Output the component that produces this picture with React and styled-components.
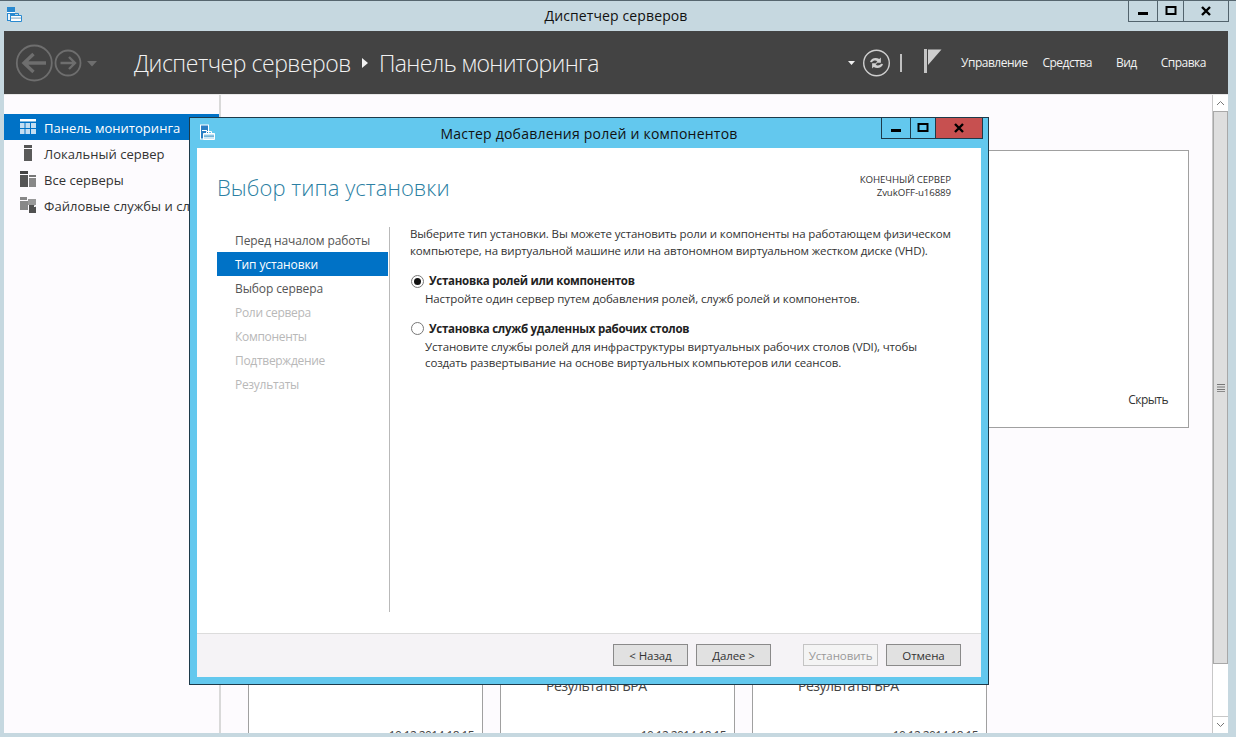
import React from "react";
import styled, { createGlobalStyle } from "styled-components";

const Global = createGlobalStyle`
  html, body { margin: 0; padding: 0; height: 100%; overflow: hidden; }
  body { font-family: "Open Sans", "Noto Sans", sans-serif; }
  #root { height: 100%; }
`;

const Window = styled.div`
  position: relative;
  width: 1236px;
  height: 737px;
  box-sizing: border-box;
  background: #c6d8e0;
  border-top: 1px solid #56666f;
  padding: 0 8px 4px 4px;
  display: flex;
  flex-direction: column;
  overflow: hidden;
`;
const TitleBar = styled.div`
  height: 30px;
  flex: none;
  display: flex;
  align-items: center;
  justify-content: center;
  font-size: 14px;
  color: #111;
  letter-spacing: 0.12px;
  padding-bottom: 1px;
  box-sizing: border-box;
`;
const AppIconSlot = styled.span`
  position: absolute;
  left: ${p => p.$left}px;
  top: ${p => p.$top}px;
  display: flex;
`;
const Controls = styled.div`
  position: absolute;
  right: ${p => p.$right}px;
  top: 0;
  display: flex;
  height: 21px;
  box-sizing: border-box;
  border: 1px solid ${p => p.$border};
  border-top: none;
`;
const Ctrl = styled.div`
  width: ${p => p.$w}px;
  display: flex;
  align-items: center;
  justify-content: center;
  box-sizing: border-box;
  background: ${p => p.$bg || "transparent"};
  border-left: ${p => (p.$first ? "none" : `1px solid ${p.$line}`)};
`;
const Toolbar = styled.div`
  height: 63px;
  flex: none;
  background: #434343;
  display: flex;
  align-items: center;
  color: #fff;
  padding: 0 22px 0 11px;
  box-sizing: border-box;
`;
const NavIcons = styled.span`
  display: flex;
  width: 119px;
  flex: none;
`;
const Crumb = styled.div`
  font-size: 23px;
  font-weight: 300;
  color: #f2f2f2;
  display: flex;
  align-items: center;
  gap: 10px;
  white-space: nowrap;
  letter-spacing: -0.46px;
`;
const CrumbTail = styled.span`
  letter-spacing: -0.62px;
`;
const Spacer = styled.div`
  flex: 1;
`;
const ToolIcons = styled.span`
  display: flex;
  margin-right: 14px;
`;
const Menu = styled.div`
  display: flex;
  font-size: 12px;
  color: #f2f2f2;
  letter-spacing: -0.5px;
`;
const MenuItem = styled.span`
  margin-left: ${p => p.$ml}px;
  white-space: nowrap;
`;
const Body = styled.div`
  flex: 1;
  min-height: 0;
  background: #fdfbfe;
  display: flex;
  border-top: 1px solid #e8e8e8;
  overflow: hidden;
`;
const Sidebar = styled.div`
  width: 215px;
  flex: none;
  border-right: 2px solid #d9d9d9;
  padding-top: 19px;
  overflow: hidden;
`;
const SideItem = styled.div`
  height: 26px;
  display: flex;
  align-items: center;
  gap: 8px;
  padding-left: 16px;
  font-size: 13px;
  white-space: nowrap;
  color: ${p => (p.$active ? "#fff" : "#333")};
  background: ${p => (p.$active ? "#0072c6" : "transparent")};
  letter-spacing: 0.03px;
  & > svg { flex: none; }
`;
const SideLabel = styled.span`
  padding-top: 2px;
`;
const Main = styled.div`
  flex: 1;
  min-width: 0;
  overflow: hidden;
  padding: 55px 0 0 27px;
  box-sizing: border-box;
  display: flex;
  flex-direction: column;
`;
const Panel = styled.div`
  width: 941px;
  height: 278px;
  flex: none;
  box-sizing: border-box;
  border: 1px solid #a0a0a0;
  background: #fff;
  display: flex;
  justify-content: flex-end;
  align-items: flex-end;
  padding: 0 20px 19px 0;
  font-size: 12px;
  color: #333;
  letter-spacing: -0.55px;
`;
const Cards = styled.div`
  display: flex;
  gap: 17px;
  margin-top: 222px;
  flex: none;
`;
const Card = styled.div`
  width: 235px;
  height: 110px;
  box-sizing: border-box;
  border: 1px solid #a0a0a0;
  background: #fff;
  padding: 27px 8px 0 45px;
  display: flex;
  flex-direction: column;
  color: #444;
`;
const CardTitle = styled.span`
  font-size: 14px;
  line-height: 16px;
  height: 16px;
  letter-spacing: -0.5px;
`;
const CardDate = styled.span`
  align-self: flex-end;
  white-space: nowrap;
  margin-top: 34px;
  font-size: 12px;
  line-height: 16px;
  letter-spacing: -0.6px;
`;
const Scrollbar = styled.div`
  width: 16px;
  flex: none;
  display: flex;
  flex-direction: column;
  background: #fff;
  border-left: 1px solid #c8c8c8;
  box-sizing: border-box;
`;
const ScrollBtn = styled.div`
  height: 16px;
  flex: none;
  display: flex;
  align-items: center;
  justify-content: center;
  ${p => (p.$down ? "border-top: 1px solid #c8c8c8;" : "")}
`;
const Thumb = styled.div`
  height: 553px;
  flex: none;
  box-sizing: border-box;
  background: #dedede;
  border: 1px solid #a8a8a8;
  display: flex;
  align-items: center;
  justify-content: center;
`;
const Track = styled.div`
  flex: 1;
`;
const Dialog = styled.div`
  position: absolute;
  left: 189px;
  top: 116px;
  width: 800px;
  height: 568px;
  box-sizing: border-box;
  border: 1px solid #1d3a4a;
  background: #63c8ee;
  padding: 30px 7px 7px;
  display: flex;
  flex-direction: column;
`;
const DialogTitle = styled.div`
  position: absolute;
  left: 0;
  right: 0;
  top: 6px;
  text-align: center;
  font-size: 14px;
  color: #111;
  letter-spacing: 0.22px;
`;
const DialogBody = styled.div`
  flex: 1;
  min-height: 0;
  background: #fff;
  display: flex;
  flex-direction: column;
`;
const Head = styled.div`
  height: 79px;
  flex: none;
  display: flex;
  justify-content: space-between;
  padding: 23px 30px 0 20px;
  box-sizing: border-box;
`;
const Heading = styled.h1`
  margin: 0;
  font-size: 22px;
  font-weight: 300;
  color: #2c7fa3;
  line-height: 32px;
  letter-spacing: 0.05px;
`;
const Target = styled.div`
  text-align: right;
  font-size: 9.7px;
  line-height: 13px;
  color: #333;
  letter-spacing: -0.1px;
  padding-top: 2px;
`;
const Columns = styled.div`
  flex: 1;
  min-height: 0;
  display: flex;
  padding: 0 20px 21px 20px;
`;
const Steps = styled.div`
  width: 171px;
  flex: none;
  padding-top: 1px;
`;
const Step = styled.div`
  height: 24px;
  display: flex;
  align-items: center;
  padding-left: 18px;
  font-size: 12px;
  letter-spacing: ${p => (p.$off ? "-0.3px" : "-0.1px")};
  color: ${p => (p.$active ? "#fff" : p.$off ? "#b8b8b8" : "#555")};
  background: ${p => (p.$active ? "#0072c6" : "transparent")};
`;
const Pane = styled.div`
  flex: 1;
  min-width: 0;
  margin-left: 1px;
  border-left: 1px solid #b9b9b9;
  padding: 0 0 0 20px;
  font-size: 11.5px;
  color: #333;
  letter-spacing: -0.13px;
  white-space: nowrap;
`;
const Intro = styled.p`
  margin: -1px 0 14px;
  line-height: 16.5px;
`;
const Option = styled.div`
  margin-bottom: ${p => p.$mb}px;
`;
const OptionLabel = styled.div`
  display: flex;
  align-items: center;
  gap: 5px;
  font-weight: 700;
  color: #222;
  font-size: 11.5px;
  line-height: 16px;
  letter-spacing: -0.27px;
`;
const Radio = styled.span`
  width: 13px;
  height: 13px;
  box-sizing: border-box;
  border-radius: 50%;
  border: 1px solid #777;
  background: #fff;
  margin-left: 1px;
  display: flex;
  align-items: center;
  justify-content: center;
  &::after {
    content: "";
    width: 7px;
    height: 7px;
    border-radius: 50%;
    background: ${p => (p.$on ? "#111" : "transparent")};
  }
`;
const OptionDesc = styled.div`
  margin: 2px 0 0 15px;
  line-height: 16.5px;
`;
const Footer = styled.div`
  height: 44px;
  flex: none;
  background: #f5f3f6;
  border-top: 1px solid #dcdcdc;
  box-sizing: border-box;
  display: flex;
  align-items: flex-start;
  padding: 10px 20px 0 0;
  justify-content: flex-end;
`;
const Button = styled.div`
  width: 75px;
  height: 22px;
  box-sizing: border-box;
  margin-left: ${p => p.$ml}px;
  display: flex;
  align-items: center;
  justify-content: center;
  font-size: 11.5px;
  letter-spacing: -0.1px;
  background: ${p => (p.$off ? "#f4f4f4" : "#e1e1e1")};
  border: 1px solid ${p => (p.$off ? "#c4c4c4" : "#8a8a8a")};
  color: ${p => (p.$off ? "#999" : "#333")};
`;

const AppIcon = ({ edge = "#2a8ad0", fill = "#2a8ad0" }) => (
  <svg width="16" height="16" viewBox="0 0 16 16">
    <rect x="1" y="1" width="8" height="5" fill={fill} />
    <rect x="1" y="6" width="8" height="1" fill="#ffffff" />
    <path d="M1 7h8v3H4v5H1z" fill={fill} />
    <rect x="2" y="8" width="2" height="6" fill="#e9f4fb" />
    <path d="M4.5 9.5h11v6h-11z" fill="#fff" stroke={edge} />
    <path d="M5 11.5h10v1.2H5z" fill="#8fb4cc" />
    <path d="M7.5 9.5V7.5h5v2" fill="none" stroke={edge} />
  </svg>
);
const DialogIcon = () => (
  <svg width="16" height="16" viewBox="0 0 16 16">
    <rect x="1.5" y="1" width="8" height="14" fill="#2a7fc4" stroke="#fff" />
    <rect x="3" y="6" width="5" height="1" fill="#fff" />
    <path d="M4.5 9.5h11v6h-11z" fill="#cfe9f5" stroke="#fff" />
    <path d="M5 11.5h10v1.2H5z" fill="#4a9ccc" />
    <path d="M7.5 9.5V7.5h5v2" fill="none" stroke="#fff" />
  </svg>
);
const BackNav = () => (
  <svg width="92" height="40" viewBox="0 0 92 40" fill="none" stroke="#6e6e6e">
    <circle cx="19.3" cy="20" r="17.5" strokeWidth="1.8" />
    <path d="M9 20h22M18.5 11l-9.5 9 9.5 9" strokeWidth="3.4" />
    <circle cx="53" cy="20" r="12.5" strokeWidth="1.8" />
    <path d="M60 20H45.5M54 14l6 6-6 6" strokeWidth="2.4" />
    <path d="M72 18h10l-5 5.5z" fill="#6e6e6e" stroke="none" />
  </svg>
);
const Caret = () => (
  <svg width="8" height="12" viewBox="0 0 8 12"><path d="M1 1l6 5-6 5z" fill="#f2f2f2" /></svg>
);
const Tools = () => (
  <svg width="100" height="28" viewBox="0 0 100 28" fill="none">
    <path d="M1 12h7l-3.5 4z" fill="#f0f0f0" />
    <circle cx="29.5" cy="14" r="12.8" stroke="#cfcfcf" strokeWidth="1.4" />
    <path d="M23 13c.8-3.6 5.6-5.4 9.3-3l1.6-1.4v5.2h-5.2l1.7-1.5c-2-1.3-4.6-.6-5.4 1z" fill="#cfcfcf" />
    <path d="M36 15c-.8 3.6-5.6 5.4-9.3 3l-1.6 1.4v-5.2h5.2l-1.7 1.5c2 1.3 4.6.6 5.4-1z" fill="#cfcfcf" />
    <path d="M54 5v18" stroke="#cfcfcf" strokeWidth="1.8" />
    <path d="M78.5 0v24" stroke="#c4c4c4" strokeWidth="3" />
    <path d="M81 0.5h13.5L81 16z" fill="#cfcfcf" />
  </svg>
);
const WinGlyph = ({ kind }) => {
  if (kind === "min") return <svg width="12" height="10" viewBox="0 0 12 10"><rect x="1" y="6" width="10" height="3" fill="#000" /></svg>;
  if (kind === "max") return <svg width="12" height="10" viewBox="0 0 12 10"><rect x="1.5" y="1" width="9" height="7" fill="none" stroke="#000" strokeWidth="2" /></svg>;
  return <svg width="12" height="10" viewBox="0 0 12 10"><path d="M2 1l8 8M10 1l-8 8" stroke="#000" strokeWidth="2.4" /></svg>;
};
const DashIcon = () => (
  <svg width="16" height="16" viewBox="0 0 16 16">
    <rect x="0" y="0" width="16" height="2.5" fill="#fff" />
    <path d="M0 4h4.5v5H0zM5.5 4H10v5H5.5zM11 4h5v5h-5zM0 10h4.5v5H0zM5.5 10H10v5H5.5zM11 10h5v5h-5z" fill="#c4def2" />
  </svg>
);
const LocalIcon = () => (
  <svg width="16" height="16" viewBox="0 0 16 16">
    <rect x="4" y="0" width="8" height="3" fill="#555" />
    <rect x="4" y="4" width="8" height="12" fill="#5a5a5a" />
  </svg>
);
const AllIcon = () => (
  <svg width="16" height="16" viewBox="0 0 16 16">
    <rect x="0" y="0" width="8" height="3" fill="#444" />
    <rect x="0" y="4" width="8" height="12" fill="#555" />
    <rect x="9" y="4" width="7" height="2" fill="#777" />
    <rect x="9" y="7" width="7" height="9" fill="#888" />
  </svg>
);
const FileIcon = () => (
  <svg width="16" height="16" viewBox="0 0 16 16">
    <rect x="0" y="0" width="7" height="3" fill="#888" />
    <rect x="0" y="4" width="8" height="9" fill="#888" />
    <path d="M8 2h8v6H8z" fill="#999" />
    <path d="M9 8h5l2 2v6H9z" fill="#505050" />
    <path d="M14 8l2 2h-2z" fill="#fff" />
  </svg>
);
const Chevron = ({ down }) => (
  <svg width="9" height="6" viewBox="0 0 9 6"><path d={down ? "M1 1l3.5 3.5L8 1" : "M1 5l3.5-3.5L8 5"} fill="none" stroke="#777" /></svg>
);
const Grip = () => (
  <svg width="8" height="8" viewBox="0 0 8 8"><path d="M0 .5h8M0 3h8M0 5.5h8M0 7.7h8" stroke="#777" /></svg>
);

const steps = [
  ["Перед началом работы"],
  ["Тип установки", "active"],
  ["Выбор сервера"],
  ["Роли сервера", "off"],
  ["Компоненты", "off"],
  ["Подтверждение", "off"],
  ["Результаты", "off"],
];

export default function App() {
  return (
    <>
      <Global />
      <Window>
        <AppIconSlot $left={6} $top={5}><AppIcon /></AppIconSlot>
        <TitleBar>Диспетчер серверов</TitleBar>
        <Controls $right={7} $border="#52636d">
          <Ctrl $w={28} $first $line="#52636d"><WinGlyph kind="min" /></Ctrl>
          <Ctrl $w={26} $line="#52636d"><WinGlyph kind="max" /></Ctrl>
          <Ctrl $w={45} $line="#52636d"><WinGlyph kind="x" /></Ctrl>
        </Controls>
        <Toolbar>
          <NavIcons><BackNav /></NavIcons>
          <Crumb>Диспетчер серверов <Caret /> <CrumbTail>Панель мониторинга</CrumbTail></Crumb>
          <Spacer />
          <ToolIcons><Tools /></ToolIcons>
          <Menu>
            <MenuItem $ml={0}>Управление</MenuItem>
            <MenuItem $ml={15}>Средства</MenuItem>
            <MenuItem $ml={24}>Вид</MenuItem>
            <MenuItem $ml={24}>Справка</MenuItem>
          </Menu>
        </Toolbar>
        <Body>
          <Sidebar>
            <SideItem $active><DashIcon /><SideLabel>Панель мониторинга</SideLabel></SideItem>
            <SideItem><LocalIcon /><SideLabel>Локальный сервер</SideLabel></SideItem>
            <SideItem><AllIcon /><SideLabel>Все серверы</SideLabel></SideItem>
            <SideItem><FileIcon /><SideLabel>Файловые службы и службы хранилища</SideLabel></SideItem>
          </Sidebar>
          <Main>
            <Panel>Скрыть</Panel>
            <Cards>
              <Card><CardTitle /><CardDate>10.12.2014 18:15</CardDate></Card>
              <Card><CardTitle>Результаты БРА</CardTitle><CardDate>10.12.2014 18:15</CardDate></Card>
              <Card><CardTitle>Результаты БРА</CardTitle><CardDate>10.12.2014 18:15</CardDate></Card>
            </Cards>
          </Main>
          <Scrollbar>
            <ScrollBtn><Chevron /></ScrollBtn>
            <Thumb><Grip /></Thumb>
            <Track />
            <ScrollBtn $down><Chevron down /></ScrollBtn>
          </Scrollbar>
        </Body>
        <Dialog>
          <AppIconSlot $left={9} $top={6}><DialogIcon /></AppIconSlot>
          <DialogTitle>Мастер добавления ролей и компонентов</DialogTitle>
          <Controls $right={5} $border="#1d3a4a">
            <Ctrl $w={28} $first $line="#1d3a4a"><WinGlyph kind="min" /></Ctrl>
            <Ctrl $w={25} $line="#1d3a4a"><WinGlyph kind="max" /></Ctrl>
            <Ctrl $w={47} $bg="#c75050" $line="#1d3a4a"><WinGlyph kind="x" /></Ctrl>
          </Controls>
          <DialogBody>
            <Head>
              <Heading>Выбор типа установки</Heading>
              <Target>КОНЕЧНЫЙ СЕРВЕР<br />ZvukOFF-u16889</Target>
            </Head>
            <Columns>
              <Steps>
                {steps.map(([label, state]) => (
                  <Step key={label} $active={state === "active"} $off={state === "off"}>{label}</Step>
                ))}
              </Steps>
              <Pane>
                <Intro>
                  Выберите тип установки. Вы можете установить роли и компоненты на работающем физическом<br />
                  компьютере, на виртуальной машине или на автономном виртуальном жестком диске (VHD).
                </Intro>
                <Option $mb={13}>
                  <OptionLabel><Radio $on />Установка ролей или компонентов</OptionLabel>
                  <OptionDesc>Настройте один сервер путем добавления ролей, служб ролей и компонентов.</OptionDesc>
                </Option>
                <Option $mb={0}>
                  <OptionLabel><Radio />Установка служб удаленных рабочих столов</OptionLabel>
                  <OptionDesc>
                    Установите службы ролей для инфраструктуры виртуальных рабочих столов (VDI), чтобы<br />
                    создать развертывание на основе виртуальных компьютеров или сеансов.
                  </OptionDesc>
                </Option>
              </Pane>
            </Columns>
            <Footer>
              <Button $ml={0}>&lt; Назад</Button>
              <Button $ml={8}>Далее &gt;</Button>
              <Button $ml={32} $off>Установить</Button>
              <Button $ml={8}>Отмена</Button>
            </Footer>
          </DialogBody>
        </Dialog>
      </Window>
    </>
  );
}
